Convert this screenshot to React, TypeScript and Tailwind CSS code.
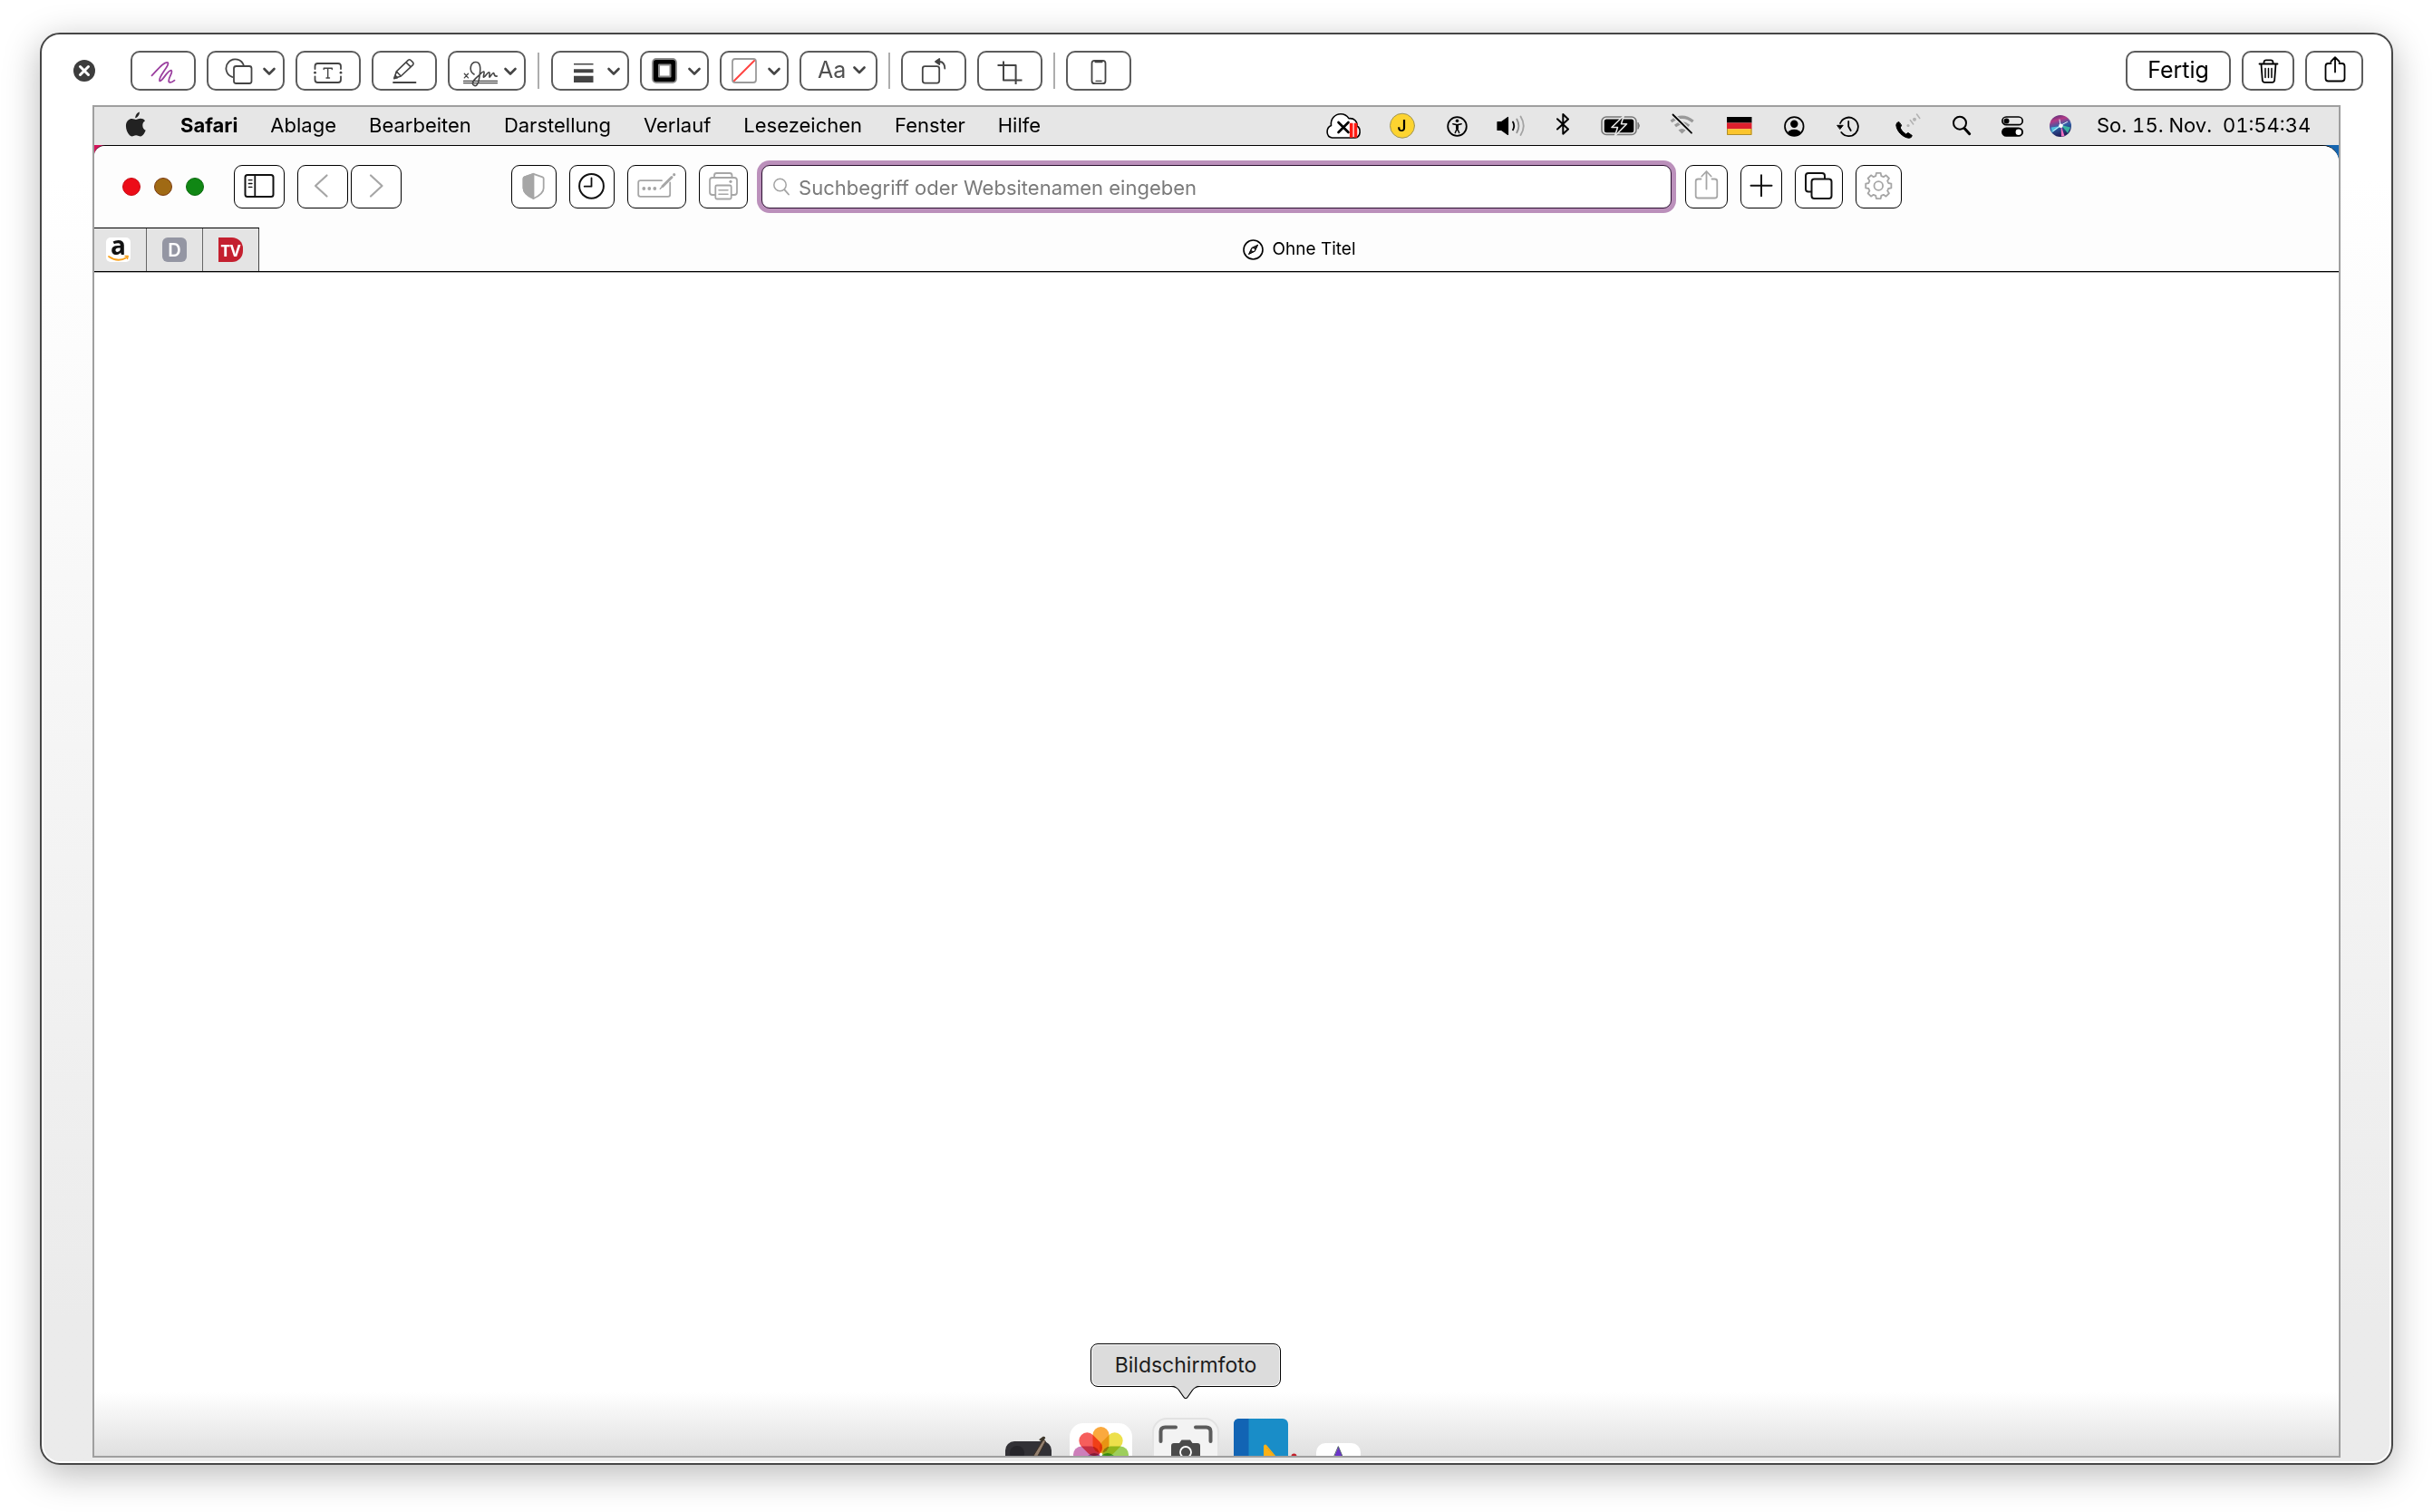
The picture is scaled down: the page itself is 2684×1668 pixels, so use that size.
import React from "react";

const chevron = (cx: number) => (
  <path d={`M${cx - 5.5} 20L${cx} 25.5L${cx + 5.5} 20`} strokeWidth={2.6} />
);

function Drawing({ w, h, className, children }: { w: number; h: number; className?: string; children: React.ReactNode }) {
  return (
    <svg
      width={w}
      height={h}
      viewBox={`0 0 ${w} ${h}`}
      fill="none"
      stroke="currentColor"
      strokeWidth={1.8}
      strokeLinecap="round"
      strokeLinejoin="round"
      aria-hidden="true"
      className={className ?? "block shrink-0"}
    >
      {children}
    </svg>
  );
}

/* ---------- Markup toolbar ---------- */

function MarkupButton({ label, w, color, children }: { label: string; w: number; color?: string; children: React.ReactNode }) {
  return (
    <button
      aria-label={label}
      className={`grid h-11 shrink-0 place-items-center overflow-hidden rounded-[10px] border-2 border-[#5c5c5c] bg-white ${color ?? "text-[#444]"}`}
    >
      <Drawing w={w - 4} h={40}>
        <g transform="translate(-2 -2)">{children}</g>
      </Drawing>
    </button>
  );
}

function MarkupToolbar() {
  return (
    <header className="flex items-center pt-[18px] pr-[31px] pb-4 pl-[35px]">
      <button aria-label="Schließen" className="mr-[39px] shrink-0 text-white">
        <Drawing w={24} h={24}>
          <circle cx="12" cy="12" r="12" fill="#3d3d3d" stroke="none" />
          <path d="M7.5 7.5L16.5 16.5M16.5 7.5L7.5 16.5" strokeWidth={3} />
        </Drawing>
      </button>
      <div className="flex items-center gap-3">
        <MarkupButton label="Zeichnen" w={72} color="text-[#9b3f9f]">
          <path d="M23.5 27.3C28 23 37 11 41 13C44 15.5 30.5 28.5 32 33C34.5 35.5 41 20.5 45 21.7C47.5 23.5 41 30 42.3 34.3C44.5 36 46.5 34.5 48.5 32.7" />
        </MarkupButton>
        <MarkupButton label="Formen" w={86}>
          <path d="M28.5 29A10 10 0 1 1 41 16.5" />
          <rect x="30" y="17" width="19.5" height="19" rx="2.5" />
          {chevron(69)}
        </MarkupButton>
        <MarkupButton label="Text" w={72}>
          <path d="M21.5 20V17a3 3 0 0 1 3-3H47a3 3 0 0 1 3 3v3M50 28.5V32a3 3 0 0 1-3 3H24.5a3 3 0 0 1-3-3v-3.5" />
          <path d="M31.2 20.5V19.3H40.3V20.5M35.7 19.3V30M34 30H37.5" strokeWidth={1.4} />
          <circle cx="21.5" cy="24.2" r="1.4" fill="currentColor" stroke="none" />
          <circle cx="50" cy="24.2" r="1.4" fill="currentColor" stroke="none" />
        </MarkupButton>
        <MarkupButton label="Hervorheben" w={72}>
          <path d="M27.3 22.8L40.3 10.3Q41.8 9.2 43.2 10.5L45.6 12.8Q46.7 14.2 45.5 15.7L32.3 28L25 30.5ZM38 12.8L43.2 17.8M27.3 22.8L32.3 28" strokeWidth={1.6} />
          <path d="M25 30.5l1-3.2 2.3 2.3z" fill="currentColor" />
          <path d="M24 35H48.5" />
        </MarkupButton>
        <MarkupButton label="Unterschrift" w={86}>
          <path d="M18.3 25.3l4.2 4.6M22.5 25.3l-4.2 4.6M17.5 33.4H54.5M17.5 35.6H54.5" strokeWidth={1.3} />
          <path d="M29 26C22.5 22 25 12.5 31 12.5C38 12.5 35.5 25 34.5 31C33.5 38 30.5 40 28 37.5C25.5 34.5 31 30 35 26.5C37 24.5 38.500 22.500 39.800 23C41 24 38.500 29 39.500 29.300C41.500 29 43.300 24 45.300 23.700C47.300 24 45 29 46 29.200C47.300 28.500 49 24.300 50.500 24.500C51.500 25 50.500 28.700 54.300 28" strokeWidth={1.6} />
          {chevron(69)}
        </MarkupButton>
        <span className="mx-px h-10 w-0.5 bg-[#adadad]" />
        <MarkupButton label="Linienstärke" w={86}>
          <path d="M25 14.7H46.5" strokeLinecap="butt" strokeWidth={1.6} />
          <path d="M25 22.2H46.5" strokeLinecap="butt" strokeWidth={4} />
          <path d="M25 31.3H46.5" strokeLinecap="butt" strokeWidth={7.2} />
          {chevron(69)}
        </MarkupButton>
        <MarkupButton label="Randfarbe" w={76}>
          <rect x="14" y="9" width="26" height="26" rx="4" fill="#000" stroke="#8a8a8a" />
          <rect x="21" y="15.5" width="12.5" height="13" fill="#fff" stroke="#8a8a8a" strokeWidth={2} />
          {chevron(60)}
        </MarkupButton>
        <MarkupButton label="Füllfarbe" w={76}>
          <rect x="14" y="9" width="26" height="26" rx="3" stroke="#9a9a9a" />
          <path d="M16 33L38 11" stroke="#ff4340" strokeWidth={2} />
          {chevron(60)}
        </MarkupButton>
        <button className="flex h-11 w-[86px] shrink-0 items-center gap-2 rounded-[10px] border-2 border-[#5c5c5c] bg-white pl-[18px] text-[25px] text-[#505050]">
          Aa
          <Drawing w={14} h={10}>
            <path d="M1.5 1.5L7 7L12.5 1.5" stroke="#444" strokeWidth={2.6} />
          </Drawing>
        </button>
        <span className="h-10 w-0.5 bg-[#adadad]" />
        <MarkupButton label="Drehen" w={72}>
          <rect x="23.8" y="17.2" width="18.4" height="18.4" rx="2.5" />
          <path d="M42.5 12Q48 12.2 48.3 19.5" />
          <path d="M38 12l4.3-3v6z" fill="currentColor" />
        </MarkupButton>
        <MarkupButton label="Beschneiden" w={72}>
          <path d="M29 11.5V32.5H49.5M22.5 16H42.6V37" strokeLinecap="butt" strokeWidth={2} />
        </MarkupButton>
        <span className="h-10 w-0.5 bg-[#adadad]" />
        <MarkupButton label="Gerät" w={72}>
          <rect x="28.5" y="10.8" width="15" height="25.4" rx="3" />
          <path d="M32.5 12h7" strokeWidth={2.4} />
          <path d="M33 33.4h6" strokeWidth={1.2} />
        </MarkupButton>
      </div>
      <div className="ml-auto flex items-center gap-3">
        <button className="h-11 w-[116px] rounded-[10px] border-2 border-[#5c5c5c] bg-white text-[25px] text-black">
          Fertig
        </button>
        <MarkupButton label="Löschen" w={58} color="text-black">
          <path d="M19.5 14.5H39.5M21.5 15L22.8 32.5Q23 34.8 25.3 34.8H33.7Q36 34.8 36.2 32.5L37.5 15M24.5 14V12.5Q24.7 10.3 27 10.3H32Q34.3 10.3 34.5 12.5V14" />
          <path d="M26 19.5V29.5M29.5 19.5V29.5M33 19.5V29.5" strokeWidth={1.5} />
        </MarkupButton>
        <MarkupButton label="Teilen" w={64} color="text-black">
          <path d="M28.5 14H25.5Q22.5 14 22.5 17V30.5Q22.5 33.5 25.5 33.5H40.5Q43.5 33.5 43.5 30.5V17Q43.5 14 40.5 14H37.5M33 23.5V7.5M28.3 12L33 7.2L37.7 12" />
        </MarkupButton>
      </div>
    </header>
  );
}

/* ---------- System menu bar ---------- */

const menus = ["Ablage", "Bearbeiten", "Darstellung", "Verlauf", "Lesezeichen", "Fenster", "Hilfe"];

function StatusItem({ label, w, children }: { label: string; w: number; children: React.ReactNode }) {
  return (
    <button aria-label={label} className="shrink-0">
      <Drawing w={w} h={42}>{children}</Drawing>
    </button>
  );
}

function MenuBar() {
  return (
    <div className="flex h-[42px] items-center bg-[#e6e6e6] pr-[33px] pl-[34px] text-black">
      <button aria-label="Apple" className="mr-[38px] shrink-0">
        <svg width="23" height="28" viewBox="0 0 23 28" fill="#222" aria-hidden="true" className="mb-1 block">
          <path d="M15.9.5C16 2.6 15.1 4.4 14 5.6 12.9 6.8 11.7 7.5 11.2 7.3 11.1 5.4 11.9 3.7 12.9 2.5 13.8 1.4 15 .7 15.9.5Z" />
          <path d="M22 10.2C20.3 11.3 19.3 12.9 19.3 15.2 19.3 17.9 20.7 19.9 22.7 20.7 22 22.7 20.5 25.2 19 26.6 17.7 27.7 16.5 27.6 15 27 12.8 26.1 11.2 26.1 9.2 27 7.7 27.7 6.3 27.6 5 26.3.8 22.1-.5 14 2.8 10.3 5.2 7.6 8.2 7.7 10.3 8.6 11.5 9.1 12.4 9.1 13.5 8.6 16.7 7.1 20 7.5 22 10.2Z" />
        </svg>
      </button>
      <nav className="flex items-center gap-9 pb-0.5 text-[22px] leading-7">
        <button className="font-bold">Safari</button>
        {menus.map((m) => (
          <button key={m}>{m}</button>
        ))}
      </nav>
      <div className="ml-auto flex items-center">
        <StatusItem label="Cloud" w={70}>
          <path d="M6.5 34C-.5 33-.5 23 5.5 20.5 4.5 13 10 7.7 16 7.7 20 7.7 23 9.5 25 12.7 31 12 34.5 16 34 21 38.5 23.5 38.5 33 32 34Z" fill="#fff" stroke="#000" strokeWidth={1.6} />
          <path d="M13.5 17L24.5 28M24.5 17L13.5 28" strokeWidth={2.6} />
          <path d="M27.7 17.7V33.7M32.5 17.7V33.7" stroke="#ff1a12" strokeWidth={3.6} strokeLinecap="butt" />
        </StatusItem>
        <StatusItem label="Benutzer J" w={63}>
          <circle cx="14" cy="20.7" r="13.5" fill="#fdd430" stroke="#9d9358" strokeWidth={1} />
          <text x="13.5" y="26.5" textAnchor="middle" fontSize="17" fontWeight="600" fill="#000" stroke="none">J</text>
        </StatusItem>
        <StatusItem label="Bedienungshilfen" w={55}>
          <circle cx="11.5" cy="21.5" r="10.3" />
          <circle cx="11.5" cy="15.2" r="1.8" fill="currentColor" stroke="none" />
          <path d="M6.8 18.7L11.5 19.7L16.2 18.7M11.5 20V23.5L9.3 28.5M11.5 23.5L13.7 28.5" strokeWidth={1.5} />
          <path d="M10 19.5h3v4.5h-3z" fill="currentColor" stroke="none" />
        </StatusItem>
        <StatusItem label="Lautstärke" w={66}>
          <path d="M1 16.5H5.5L12.5 11.5V30.5L5.5 25.5H1Z" fill="currentColor" strokeWidth={1.2} />
          <path d="M18 16.5Q20.5 20.8 18 25.3" />
          <path d="M22.3 13.5Q26.5 20.8 22.3 28.3" stroke="#8f8f8f" />
          <path d="M26.5 10.5Q33 20.8 26.5 31" stroke="#a3a3a3" />
        </StatusItem>
        <StatusItem label="Bluetooth" w={49}>
          <path d="M1 13.3L13 24.5L7.3 29.7V8L13 13.5L1 24.5" strokeWidth={2} />
        </StatusItem>
        <StatusItem label="Batterie" w={76}>
          <rect x="1" y="11" width="38" height="19.5" rx="5" stroke="#777" strokeWidth={1.6} />
          <rect x="3.8" y="13.5" width="32.5" height="14.7" rx="2.5" fill="#000" stroke="none" />
          <path d="M41.2 17.5Q43.8 20.5 41.2 24Z" fill="#777" stroke="#777" strokeWidth={1} />
          <path d="M25.3 9.5L12 22.5H18.5L15.5 32L28.5 18.7H22.5Z" fill="#000" stroke="#e6e6e6" strokeWidth={1.6} />
        </StatusItem>
        <StatusItem label="WLAN" w={63}>
          <path d="M1.5 16Q13.5 6.5 25.7 16" stroke="#999" strokeWidth={3.2} strokeLinecap="butt" />
          <path d="M6 21Q13.5 14.5 21.2 21" stroke="#999" strokeWidth={3.2} strokeLinecap="butt" />
          <path d="M9.5 25.5Q13.5 22.5 17.7 25.5L13.5 29.5Z" fill="#999" stroke="none" />
          <path d="M3.5 8.5L24 28.7" stroke="#e6e6e6" strokeWidth={4.5} />
          <path d="M3.5 8.5L24 28.7" />
        </StatusItem>
        <StatusItem label="Eingabequelle Deutsch" w={63}>
          <path d="M0 11H27.5V17.5H0Z" fill="#000" stroke="none" />
          <path d="M0 17.5H27.5V24.3H0Z" fill="#dd1f2d" stroke="none" />
          <path d="M0 24.3H27.5V31H0Z" fill="#fbc52d" stroke="none" />
          <path d="M.5 24.3V30.5H27V24.3" stroke="#ad8c2c" strokeWidth={1} />
        </StatusItem>
        <StatusItem label="Benutzer" w={58}>
          <clipPath id="userClip"><circle cx="11.3" cy="21.5" r="10.3" /></clipPath>
          <circle cx="11.3" cy="21.5" r="10.3" strokeWidth={1.7} />
          <circle cx="11.3" cy="18.7" r="4.2" fill="currentColor" stroke="none" />
          <ellipse cx="11.3" cy="29.8" rx="7.5" ry="5" fill="currentColor" stroke="none" clipPath="url(#userClip)" />
        </StatusItem>
        <StatusItem label="Time Machine" w={65}>
          <path d="M4 18A10.3 10.3 0 1 1 5.3 28M13.2 16V21.5L15.7 26" />
          <path d="M1 20.3H7.2L4 24.3Z" fill="currentColor" strokeWidth={1} />
        </StatusItem>
        <StatusItem label="Telefon" w={63}>
          <path d="M3.5 16.5Q1 17 .8 20C1.5 27 8 33.5 14.8 34.3Q17.8 34.3 18.3 31.5L14 28.5L11.5 30Q7 27.5 5.2 23L6.5 20.5Z" fill="currentColor" strokeWidth={1} />
          <path d="M16.3 14.5L19.7 19M23.5 8L26.8 12.5" stroke="#b2b2b2" strokeWidth={1.5} />
          <circle cx="14" cy="20.5" r="1.6" fill="#b2b2b2" stroke="none" />
          <circle cx="21" cy="13.7" r="2" fill="#b2b2b2" stroke="none" />
        </StatusItem>
        <StatusItem label="Suchen" w={54}>
          <circle cx="8" cy="17.7" r="7" strokeWidth={2} />
          <path d="M13 23.5L18.7 29.7" strokeWidth={3} />
        </StatusItem>
        <StatusItem label="Kontrollzentrum" w={53}>
          <rect x=".9" y="11" width="22.3" height="8.7" rx="4.3" strokeWidth={1.7} />
          <circle cx="5.5" cy="15.4" r="3" fill="currentColor" stroke="none" />
          <rect x=".9" y="23.3" width="22.3" height="8.7" rx="4.3" fill="currentColor" strokeWidth={1.7} />
          <circle cx="18.8" cy="27.7" r="3.2" fill="#fff" stroke="none" />
        </StatusItem>
        <StatusItem label="Siri" w={52}>
          <defs>
            <linearGradient id="siri" x1="0" y1="0" x2="0.3" y2="1">
              <stop offset="0" stopColor="#3a2a78" />
              <stop offset=".3" stopColor="#b43a86" />
              <stop offset=".6" stopColor="#2f5fa8" />
              <stop offset="1" stopColor="#20205c" />
            </linearGradient>
          </defs>
          <circle cx="12" cy="21" r="12" fill="url(#siri)" stroke="none" />
          <path d="M13 21L1.8 22.5L2.5 28.5Z" fill="#58d6e8" stroke="none" opacity=".8" />
          <path d="M13 20L23 22.5L20 29Z" fill="#3fd0a8" stroke="none" opacity=".8" />
          <path d="M12.5 20L16.5 32L13 32.5Z" fill="#f070c0" stroke="none" />
          <path d="M12 20.5L4 26.5M12 20.5L19.5 16.5M12 20.5L11 14" stroke="#dff6ff" strokeWidth={1} />
          <circle cx="12.5" cy="20.8" r="2.3" fill="#fff" stroke="none" />
        </StatusItem>
        <time className="w-[234px] pb-0.5 text-[22px] leading-7 whitespace-pre tabular-nums">So. 15. Nov.  01:54:34</time>
      </div>
    </div>
  );
}

/* ---------- Safari window ---------- */

function ToolButton({ label, w, dim, children }: { label: string; w: number; dim?: boolean; children: React.ReactNode }) {
  return (
    <button
      aria-label={label}
      className={`grid h-12 shrink-0 place-items-center rounded-[9px] border border-black bg-white ${dim ? "text-[#a6a6a6]" : "text-[#111]"}`}
    >
      <Drawing w={w - 2} h={46}>
        <g transform="translate(-1 -1)">{children}</g>
      </Drawing>
    </button>
  );
}

const gearPath = (() => {
  const teeth = 8;
  const pts: string[] = [];
  for (let i = 0; i < teeth; i++) {
    const mid = (i * 2 * Math.PI) / teeth - Math.PI / 2;
    for (const [offset, radius] of [[-0.27, 11.3], [-0.17, 14.3], [0.17, 14.3], [0.27, 11.3]]) {
      const a = mid + offset;
      pts.push(`${(25.3 + radius * Math.cos(a)).toFixed(2)} ${(23 + radius * Math.sin(a)).toFixed(2)}`);
    }
  }
  return `M${pts.join("L")}Z`;
})();

function SafariToolbar() {
  return (
    <div className="flex h-[90px] items-center pl-[31px]">
      <div className="mr-[33px] flex shrink-0 items-center gap-[15px]">
        <button aria-label="Fenster schließen" className="size-5 rounded-full border border-[#c80a14] bg-[#ec0c18]" />
        <button aria-label="Minimieren" className="size-5 rounded-full border border-[#7c3a10] bg-[#a06a14]" />
        <button aria-label="Vollbild" className="size-5 rounded-full border border-[#0c6a10] bg-[#108714]" />
      </div>
      <ToolButton label="Seitenleiste" w={56}>
        <rect x="12.5" y="11" width="31" height="24" rx="2.5" strokeWidth={2} />
        <path d="M23.3 11V35" strokeWidth={1.8} />
        <path d="M16.3 16.7H20M16.3 20.5H20M16.3 24.3H20" strokeWidth={1.3} />
      </ToolButton>
      <div className="ml-3.5 flex shrink-0 gap-[3px]">
        <ToolButton label="Zurück" w={56} dim>
          <path d="M32.5 11.5L20 23L32.5 34.5" strokeWidth={2.2} />
        </ToolButton>
        <ToolButton label="Vorwärts" w={56} dim>
          <path d="M22 11.5L34.5 23L22 34.5" strokeWidth={2.2} />
        </ToolButton>
      </div>
      <div className="flex-[122]" />
      <div className="flex shrink-0 gap-3.5">
        <ToolButton label="Datenschutz" w={50} dim>
          <path d="M24.5 9.8L34.5 13.3Q35.7 13.7 35.7 15V25.5C35.7 31 30 34.5 24.5 37C19 34.5 13.5 31 13.5 25.5V15Q13.5 13.7 14.5 13.3Z" />
          <path d="M24.5 9.8V37C19 34.5 13.5 31 13.5 25.5V15Q13.5 13.7 14.5 13.3Z" fill="currentColor" />
        </ToolButton>
        <ToolButton label="Verlauf" w={50}>
          <circle cx="24.5" cy="23.3" r="13.4" strokeWidth={2} />
          <path d="M24.5 14.5V23.7H16.7" />
        </ToolButton>
        <ToolButton label="Automatisch ausfüllen" w={65} dim>
          <path d="M38 17.2H14.5Q12.2 17.2 12.2 19.5V32.5Q12.2 34.8 14.5 34.8H45Q47.2 34.8 47.2 32.5V19.5" />
          <circle cx="18.3" cy="26" r="1.9" fill="currentColor" stroke="none" />
          <circle cx="24.3" cy="26" r="1.9" fill="currentColor" stroke="none" />
          <circle cx="30.3" cy="26" r="1.9" fill="currentColor" stroke="none" />
          <path d="M39 23.5L49 13.5" strokeWidth={3} />
          <path d="M36.3 26.3L39 23.5" strokeWidth={1.5} />
          <circle cx="51.7" cy="10.7" r="1.6" fill="currentColor" stroke="none" />
        </ToolButton>
        <ToolButton label="Drucken" w={54} dim>
          <path d="M17 14V11.5Q17 9 19.5 9H34Q36.5 9 36.5 11.5V14M18 33H15Q12 33 12 30V17Q12 14 15 14H39Q42 14 42 17V30Q42 33 39 33H36" />
          <rect x="18.3" y="22.5" width="17.4" height="15" rx="1.5" />
          <path d="M22 27.7H32M22 32.3H32" strokeWidth={1.6} />
          <circle cx="35" cy="18.3" r="1.6" fill="currentColor" stroke="none" />
        </ToolButton>
      </div>
      <label className="ml-[15px] flex h-12 flex-[998] items-center gap-2.5 rounded-[9px] border border-[#2b1030] bg-white pl-3 ring-5 ring-[#bb90bb]">
        <Drawing w={18} h={20}>
          <circle cx="7.5" cy="8" r="6.7" stroke="#a3a3a3" strokeWidth={1.5} />
          <path d="M12.5 13.3L17 18.5" stroke="#a3a3a3" />
        </Drawing>
        <input
          type="text"
          aria-label="Adresse"
          placeholder="Suchbegriff oder Websitenamen eingeben"
          className="h-full min-w-0 flex-1 bg-transparent pt-0.5 text-[22px] outline-none placeholder:text-[#7a7a7a]"
        />
      </label>
      <div className="ml-[15px] flex shrink-0 gap-3.5">
        <ToolButton label="Teilen" w={47} dim>
          <path d="M17.5 15.5H14.3Q11.7 15.5 11.7 18V34Q11.7 36.5 14.3 36.5H32.7Q35.3 36.5 35.3 34V18Q35.3 15.5 32.7 15.5H29.5M23.5 26.5V7.5M18.3 12.5L23.5 7L28.7 12.5" />
        </ToolButton>
        <ToolButton label="Neuer Tab" w={46}>
          <path d="M11.5 22.7H34.5M23 11.2V34.2" strokeWidth={2} />
        </ToolButton>
        <ToolButton label="Tabübersicht" w={53}>
          <path d="M18 29.5H15Q12 29.5 12 26.5V12Q12 9 15 9H30Q33 9 33 12V15" strokeWidth={2} />
          <rect x="18.5" y="15.5" width="22" height="21.5" rx="3" strokeWidth={2} />
        </ToolButton>
        <ToolButton label="Einstellungen" w={51} dim>
          <path d={gearPath} />
          <circle cx="25.3" cy="23" r="4.8" />
        </ToolButton>
      </div>
      <div className="flex-[486]" />
    </div>
  );
}

function TabBar() {
  return (
    <div className="flex h-[49px] border-b border-black shadow-[0_1px_0_#aaa]">
      <div className="flex border-t border-black bg-[#e4e4e4]">
        <button aria-label="Amazon" className="flex w-[58px] items-center border-r border-[#666] pl-[13px]">
          <span className="relative grid size-[27px] justify-items-center rounded-[5px] bg-white font-['Open_Sans',sans-serif] text-[28px] leading-[27px] font-bold text-[#111]">
            <span className="-mt-[5px]">a</span>
            <Drawing w={27} h={8} className="absolute bottom-0 left-0">
              <path d="M3 2Q13 9 23 3" stroke="#f9a11b" />
              <path d="M21 1.500L24.300 1.500L23.500 4.500" stroke="#f9a11b" strokeWidth={1.3} />
            </Drawing>
          </span>
        </button>
        <button aria-label="D" className="grid w-[62px] place-items-center border-r border-[#666]">
          <span className="grid size-[27px] place-items-center rounded-md bg-[#9496a3] text-xl font-semibold text-white">D</span>
        </button>
        <button aria-label="TV" className="grid w-[62px] place-items-center border-r border-[#444]">
          <span className="grid h-[27px] w-[27px] place-items-center rounded-r-[12px] bg-[#c4202f] font-['Open_Sans',sans-serif] text-lg leading-6 font-bold text-white">
            TV
          </span>
        </button>
      </div>
      <button className="flex flex-1 items-center justify-center gap-2.5 text-[19px] text-black">
        <Drawing w={23} h={23}>
          <circle cx="11.5" cy="11.5" r="10.5" strokeWidth={1.6} />
          <path d="M16.5 6.5L13.3 13.2L6.5 16.5L9.7 9.8Z" fill="#222" strokeWidth={1} />
          <circle cx="11.5" cy="11.5" r="1.6" fill="#fff" stroke="none" />
        </Drawing>
        Ohne Titel
      </button>
    </div>
  );
}

/* ---------- Dock ---------- */

const petals: [number, string][] = [
  [0, "#f99a1c"],
  [45, "#eadb2b"],
  [90, "#8cc63f"],
  [135, "#4bb58a"],
  [180, "#5b9bd5"],
  [225, "#9b7fc6"],
  [270, "#c468ae"],
  [315, "#f4423f"],
];

function Dock() {
  return (
    <div className="flex items-end justify-center bg-linear-to-b from-white to-[#e0e0e0] pt-7 pr-[74px]">
      <button aria-label="GarageBand" className="mr-5">
        <Drawing w={51} h={22}>
          <rect x="0" y="6" width="51" height="40" rx="10" fill="#323136" stroke="none" />
          <circle cx="13" cy="19" r="8" fill="#26252a" stroke="none" />
          <path d="M31 22L42 4L44.5 6L36 22Z" fill="#94806f" stroke="#3b2f26" strokeWidth={1} />
          <path d="M38 4L42 1L44 2L41 6Z" fill="#3b3428" stroke="#3b3428" strokeWidth={1} />
        </Drawing>
      </button>
      <button aria-label="Fotos" className="mr-[22px]">
        <Drawing w={69} h={36}>
          <rect width="69" height="69" rx="15" fill="#fff" stroke="none" />
          {petals.map(([angle, color]) => (
            <rect
              key={angle}
              x="25.5"
              y="4"
              width="18"
              height="29"
              rx="9"
              fill={color}
              fillOpacity={0.85}
              stroke="none"
              transform={`rotate(${angle} 34.5 34.5)`}
              className="mix-blend-multiply"
            />
          ))}
        </Drawing>
      </button>
      <div className="relative mr-4">
        <div role="tooltip" className="absolute bottom-full left-1/2 mb-5 -translate-x-1/2 pb-3.5">
          <div className="grid h-12 w-[210px] place-items-center rounded-lg border border-black bg-[#dcdcdc] text-[23px] text-[#1c1c1c] inset-ring inset-ring-white">
            Bildschirmfoto
          </div>
          <Drawing w={32} h={17} className="absolute bottom-0 left-1/2 block -translate-x-1/2">
            <path d="M0 0H32V1.5Q26.5 2 23.5 6L18.3 13.5Q16 17 13.7 13.5L8.5 6Q5.5 2 0 1.5Z" fill="#dcdcdc" stroke="none" />
            <path d="M0 2.5Q5.5 2.5 8.5 6.5L13.7 14Q16 17.5 18.3 14L23.5 6.5Q26.5 2.5 32 2.5" stroke="#000" strokeWidth={1.2} />
          </Drawing>
        </div>
        <button aria-label="Bildschirmfoto" className="block">
          <Drawing w={74} h={42}>
            <rect x="1" y="1" width="72" height="72" rx="15" fill="#f3f3f3" stroke="#e2e2e2" strokeWidth={2} />
            <path d="M9.5 26V15Q9.5 10.5 14.5 10.5H26M48 10.5H59.5Q64.5 10.5 64.5 15V26" stroke="#5c5c5c" strokeWidth={4} />
            <path d="M21 44V31Q21 28 24 28H30L32.5 24.5H42L44.5 28H50Q53 28 53 31V44Z" fill="#4a4a4a" stroke="none" />
            <circle cx="37" cy="38" r="6" fill="#4a4a4a" stroke="#fff" />
          </Drawing>
        </button>
      </div>
      <button aria-label="Wörterbuch" className="mr-[21px]">
        <Drawing w={70} h={41}>
          <rect width="60" height="60" rx="6" fill="#198dc8" stroke="none" />
          <path d="M6 0H16.5V41H0V6Q0 0 6 0Z" fill="#1264b4" stroke="none" />
          <path d="M33 41V30Q34 27.5 36 29L46 41Z" fill="#fbb117" stroke="none" />
          <path d="M36.5 32L44.5 41" stroke="#d18e12" strokeWidth={1} strokeDasharray="1 1.5" strokeLinecap="butt" />
          <circle cx="66.5" cy="41.5" r="3" fill="#c3202b" stroke="none" />
        </Drawing>
      </button>
      <button aria-label="iMovie">
        <Drawing w={49} h={14}>
          <rect width="49" height="49" rx="10" fill="#fff" stroke="none" />
          <path d="M24.5 4L30 17H19Z" fill="#6c35c9" stroke="#53606e" strokeWidth={1} />
        </Drawing>
      </button>
    </div>
  );
}

export default function App() {
  return (
    <div className="flex min-h-screen flex-col bg-white px-11 pt-9 pb-[52px] font-[Inter,'Liberation_Sans',sans-serif]">
      <main className="flex flex-1 flex-col rounded-[22px] border-2 border-[#464646] bg-linear-to-b from-white from-10% to-[#ebebeb] to-90% shadow-[0_10px_40px_rgba(0,0,0,0.28)] inset-ring-2 inset-ring-white">
        <MarkupToolbar />
        <section className="mx-14 mb-1.5 flex flex-1 flex-col border-2 border-[#9f9f9f] bg-white">
          <MenuBar />
          <div className="flex flex-1 flex-col bg-linear-to-r from-[#d4145a] from-50% to-[#1565b0] to-50%">
            <div className="flex flex-1 flex-col overflow-hidden rounded-tl-[12px] rounded-tr-[18px] border-t border-black bg-white">
              <div className="bg-[#fdfdfd]">
                <SafariToolbar />
                <TabBar />
              </div>
              <div className="flex-1" />
              <Dock />
            </div>
          </div>
        </section>
      </main>
    </div>
  );
}
